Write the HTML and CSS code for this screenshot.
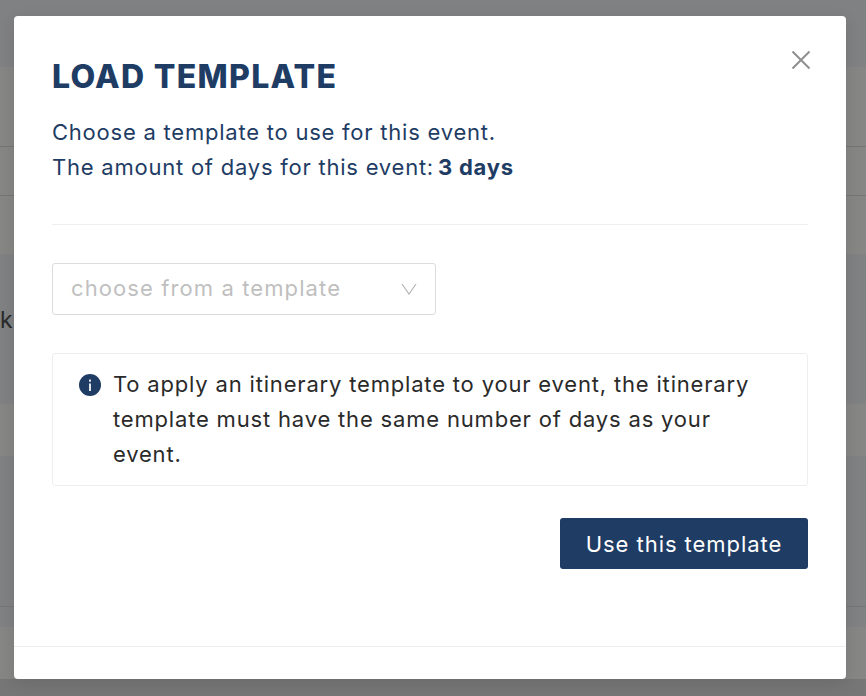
FILE: index.html
```html
<!DOCTYPE html>
<html lang="en">
<head>
    <meta charset="UTF-8">
    <meta name="viewport" content="width=device-width, initial-scale=1.0">
    <title>Load Template</title>
    <link rel="stylesheet" href="styles.css">
</head>
<body>
    <!-- page behind the dialog -->
    <div class="page">
        <div class="band dark h-67"></div>
        <div class="band light h-80 ruled"></div>
        <div class="band light h-49 ruled"></div>
        <div class="band light h-58"></div>
        <div class="band dark h-150"><span class="page-letter">k</span></div>
        <div class="band light h-52"></div>
        <div class="band dark h-151 ruled"></div>
        <div class="band dark h-20"></div>
        <div class="band light h-52"></div>
        <div class="band bottom"></div>
    </div>

    <div class="overlay">
        <div class="modal">
            <div class="modal-body">
                <button class="close-btn" aria-label="Close">
                    <svg width="20" height="20" viewBox="0 0 20 20"><path d="M1.5 1.5L18.5 18.5M18.5 1.5L1.5 18.5" fill="none" stroke="#8f8f8f" stroke-width="2"/></svg>
                </button>
                <h2 class="modal-title">LOAD TEMPLATE</h2>
                <p class="intro">Choose a template to use for this event.</p>
                <p class="intro">The amount of days for this event: <strong>3 days</strong></p>
                <hr class="divider">
                <div class="select-box">
                    <span>choose from a template</span>
                    <svg width="16" height="12" viewBox="0 0 16 12"><path d="M1 1L8 11L15 1" fill="none" stroke="#b4b4b4" stroke-width="1.2"/></svg>
                </div>
                <div class="notice">
                    <svg class="notice-icon" width="22" height="22" viewBox="0 0 22 22"><circle cx="11" cy="11" r="11" fill="#1e3c64"/><rect x="10" y="9.5" width="2" height="7.5" fill="#dfe4ea"/><rect x="10" y="5.5" width="2" height="2.2" fill="#dfe4ea"/></svg>
                    <p>To apply an itinerary template to your event, the itinerary template must have the same number of days as your event.</p>
                </div>
                <div class="actions">
                    <button class="primary-btn">Use this template</button>
                </div>
            </div>
            <div class="modal-footer"></div>
        </div>
    </div>
</body>
</html>
```

FILE: styles.css
```css
html, body {
    margin: 0;
    height: 100%;
    overflow: hidden;
}
body {
    font-family: Inter, "Open Sans", sans-serif;
    background: #828385;
}
.page {
    display: flex;
    flex-direction: column;
    height: 696px;
}
.band {
    box-sizing: border-box;
}
.dark { background: #808183; }
.light { background: #868685; }
.ruled { border-bottom: 1px solid #757575; }
.bottom { flex: 1; background: #767676; }
.h-20 { height: 20px; }
.h-49 { height: 49px; }
.h-52 { height: 52px; }
.h-58 { height: 58px; }
.h-67 { height: 67px; }
.h-80 { height: 80px; }
.h-150 { height: 150px; }
.h-151 { height: 151px; }
.page-letter {
    display: block;
    margin-top: 52px;
    font-size: 23px;
    color: #2a2a2a;
}
.overlay {
    position: absolute;
    top: 0;
    left: 0;
    right: 0;
    bottom: 0;
    padding: 16px 20px 17px 14px;
    display: flex;
}
.modal {
    flex: 1;
    display: flex;
    flex-direction: column;
    background: #fff;
    border-radius: 4px;
    box-shadow: 0 4px 16px rgba(0,0,0,0.1);
}
.modal-body {
    position: relative;
    flex: 1;
    padding: 41px 38px 0;
}
.modal-footer {
    height: 32px;
    border-top: 1px solid #eceef0;
}
.close-btn {
    position: absolute;
    top: 34px;
    right: 35px;
    padding: 0;
    border: 0;
    background: none;
    display: flex;
}
.modal-title {
    margin: 0 0 18px;
    font-size: 32px;
    line-height: 40px;
    font-weight: 800;
    letter-spacing: 1.3px;
    color: #1e3c64;
}
.intro {
    margin: 0;
    font-size: 22px;
    line-height: 35px;
    letter-spacing: 0.77px;
    color: #1e3c64;
}
.intro strong {
    margin-left: -3px;
}
.divider {
    margin: 39px 0 38px;
    border: 0;
    border-top: 1px solid #eceef0;
}
.select-box {
    box-sizing: border-box;
    width: 384px;
    height: 52px;
    padding: 0 18px 2px;
    display: flex;
    align-items: center;
    justify-content: space-between;
    border: 1px solid #dcdcdc;
    border-radius: 3px;
    font-size: 22px;
    letter-spacing: 1.1px;
    color: #bfbfbf;
}
.select-box svg {
    margin-top: 2px;
}
.notice {
    display: flex;
    gap: 12px;
    margin-top: 38px;
    padding: 13px 40px 13px 26px;
    border: 1px solid #eeeeee;
    border-radius: 3px;
}
.notice-icon {
    flex: none;
    margin-top: 7px;
}
.notice p {
    margin: 0;
    font-size: 22px;
    line-height: 35px;
    letter-spacing: 0.82px;
    color: #2a2a2a;
}
.actions {
    display: flex;
    justify-content: flex-end;
    margin-top: 32px;
}
.primary-btn {
    width: 248px;
    height: 51px;
    border: 0;
    border-radius: 3px;
    background: #1e3c64;
    color: #fff;
    font-family: inherit;
    font-size: 22px;
    letter-spacing: 0.95px;
}
```
